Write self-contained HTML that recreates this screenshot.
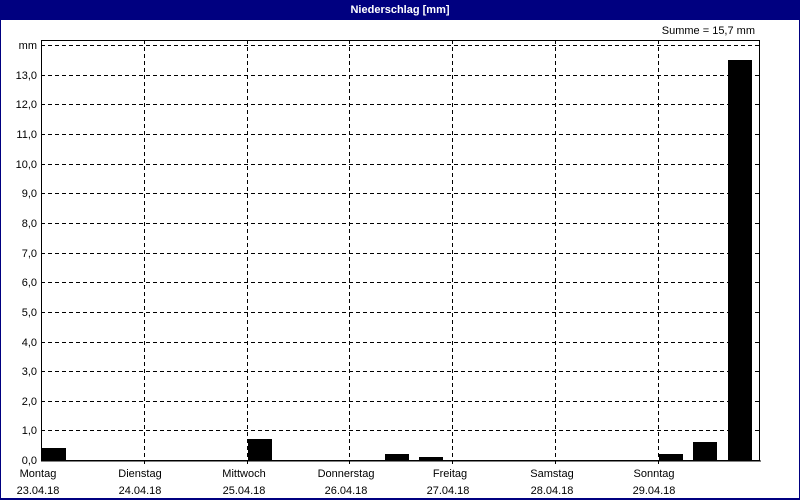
<!DOCTYPE html>
<html><head><meta charset="utf-8"><style>
html,body{margin:0;padding:0;background:#fff;}
svg{display:block;font-family:"Liberation Sans",Arial,sans-serif;font-size:11px;}
</style></head><body>
<svg width="800" height="500" xmlns="http://www.w3.org/2000/svg">
<rect x="0" y="0" width="800" height="500" fill="#fff"/>
<rect x="0" y="0" width="800" height="20" fill="#000080"/>
<rect x="0" y="0" width="1" height="500" fill="#000080"/>
<rect x="799" y="0" width="1" height="500" fill="#000080"/>
<rect x="0" y="498" width="800" height="2" fill="#000080"/>
<text x="400" y="13" text-anchor="middle" fill="#fff" font-weight="bold" font-size="11">Niederschlag [mm]</text>
<text x="755" y="34" text-anchor="end" fill="#000">Summe = 15,7 mm</text>
<g stroke="#000" stroke-width="1" stroke-dasharray="4,3" fill="none">
<line x1="41" y1="45.5" x2="760" y2="45.5"/>
<line x1="41" y1="75.5" x2="760" y2="75.5"/>
<line x1="41" y1="104.5" x2="760" y2="104.5"/>
<line x1="41" y1="134.5" x2="760" y2="134.5"/>
<line x1="41" y1="164.5" x2="760" y2="164.5"/>
<line x1="41" y1="193.5" x2="760" y2="193.5"/>
<line x1="41" y1="223.5" x2="760" y2="223.5"/>
<line x1="41" y1="253.5" x2="760" y2="253.5"/>
<line x1="41" y1="282.5" x2="760" y2="282.5"/>
<line x1="41" y1="312.5" x2="760" y2="312.5"/>
<line x1="41" y1="342.5" x2="760" y2="342.5"/>
<line x1="41" y1="371.5" x2="760" y2="371.5"/>
<line x1="41" y1="401.5" x2="760" y2="401.5"/>
<line x1="41" y1="430.5" x2="760" y2="430.5"/>
<line x1="144.5" y1="40" x2="144.5" y2="464"/>
<line x1="247.5" y1="40" x2="247.5" y2="464"/>
<line x1="349.5" y1="40" x2="349.5" y2="464"/>
<line x1="452.5" y1="40" x2="452.5" y2="464"/>
<line x1="555.5" y1="40" x2="555.5" y2="464"/>
<line x1="658.5" y1="40" x2="658.5" y2="464"/>
</g>
<rect x="41.5" y="40.5" width="718" height="420" fill="none" stroke="#000"/>
<line x1="41" y1="461" x2="761" y2="461" stroke="#000" stroke-width="1"/>
<g fill="#000">
<rect x="42" y="448" width="24" height="12"/>
<rect x="248" y="439" width="24" height="21"/>
<rect x="385" y="454" width="24" height="6"/>
<rect x="419" y="457" width="24" height="3"/>
<rect x="659" y="454" width="24" height="6"/>
<rect x="693" y="442" width="24" height="18"/>
<rect x="728" y="60" width="24" height="400"/>
</g>
<g text-anchor="end" fill="#000">
<text x="37" y="49">mm</text>
<text x="37" y="79">13,0</text>
<text x="37" y="108">12,0</text>
<text x="37" y="138">11,0</text>
<text x="37" y="168">10,0</text>
<text x="37" y="197">9,0</text>
<text x="37" y="227">8,0</text>
<text x="37" y="257">7,0</text>
<text x="37" y="286">6,0</text>
<text x="37" y="316">5,0</text>
<text x="37" y="346">4,0</text>
<text x="37" y="375">3,0</text>
<text x="37" y="405">2,0</text>
<text x="37" y="434">1,0</text>
<text x="37" y="464">0,0</text>
</g>
<g text-anchor="middle" fill="#000">
<text x="38" y="477">Montag</text><text x="38" y="494">23.04.18</text>
<text x="140" y="477">Dienstag</text><text x="140" y="494">24.04.18</text>
<text x="244" y="477">Mittwoch</text><text x="244" y="494">25.04.18</text>
<text x="346" y="477">Donnerstag</text><text x="346" y="494">26.04.18</text>
<text x="450" y="477">Freitag</text><text x="448" y="494">27.04.18</text>
<text x="552" y="477">Samstag</text><text x="552" y="494">28.04.18</text>
<text x="654" y="477">Sonntag</text><text x="654" y="494">29.04.18</text>
</g>
</svg>
</body></html>
